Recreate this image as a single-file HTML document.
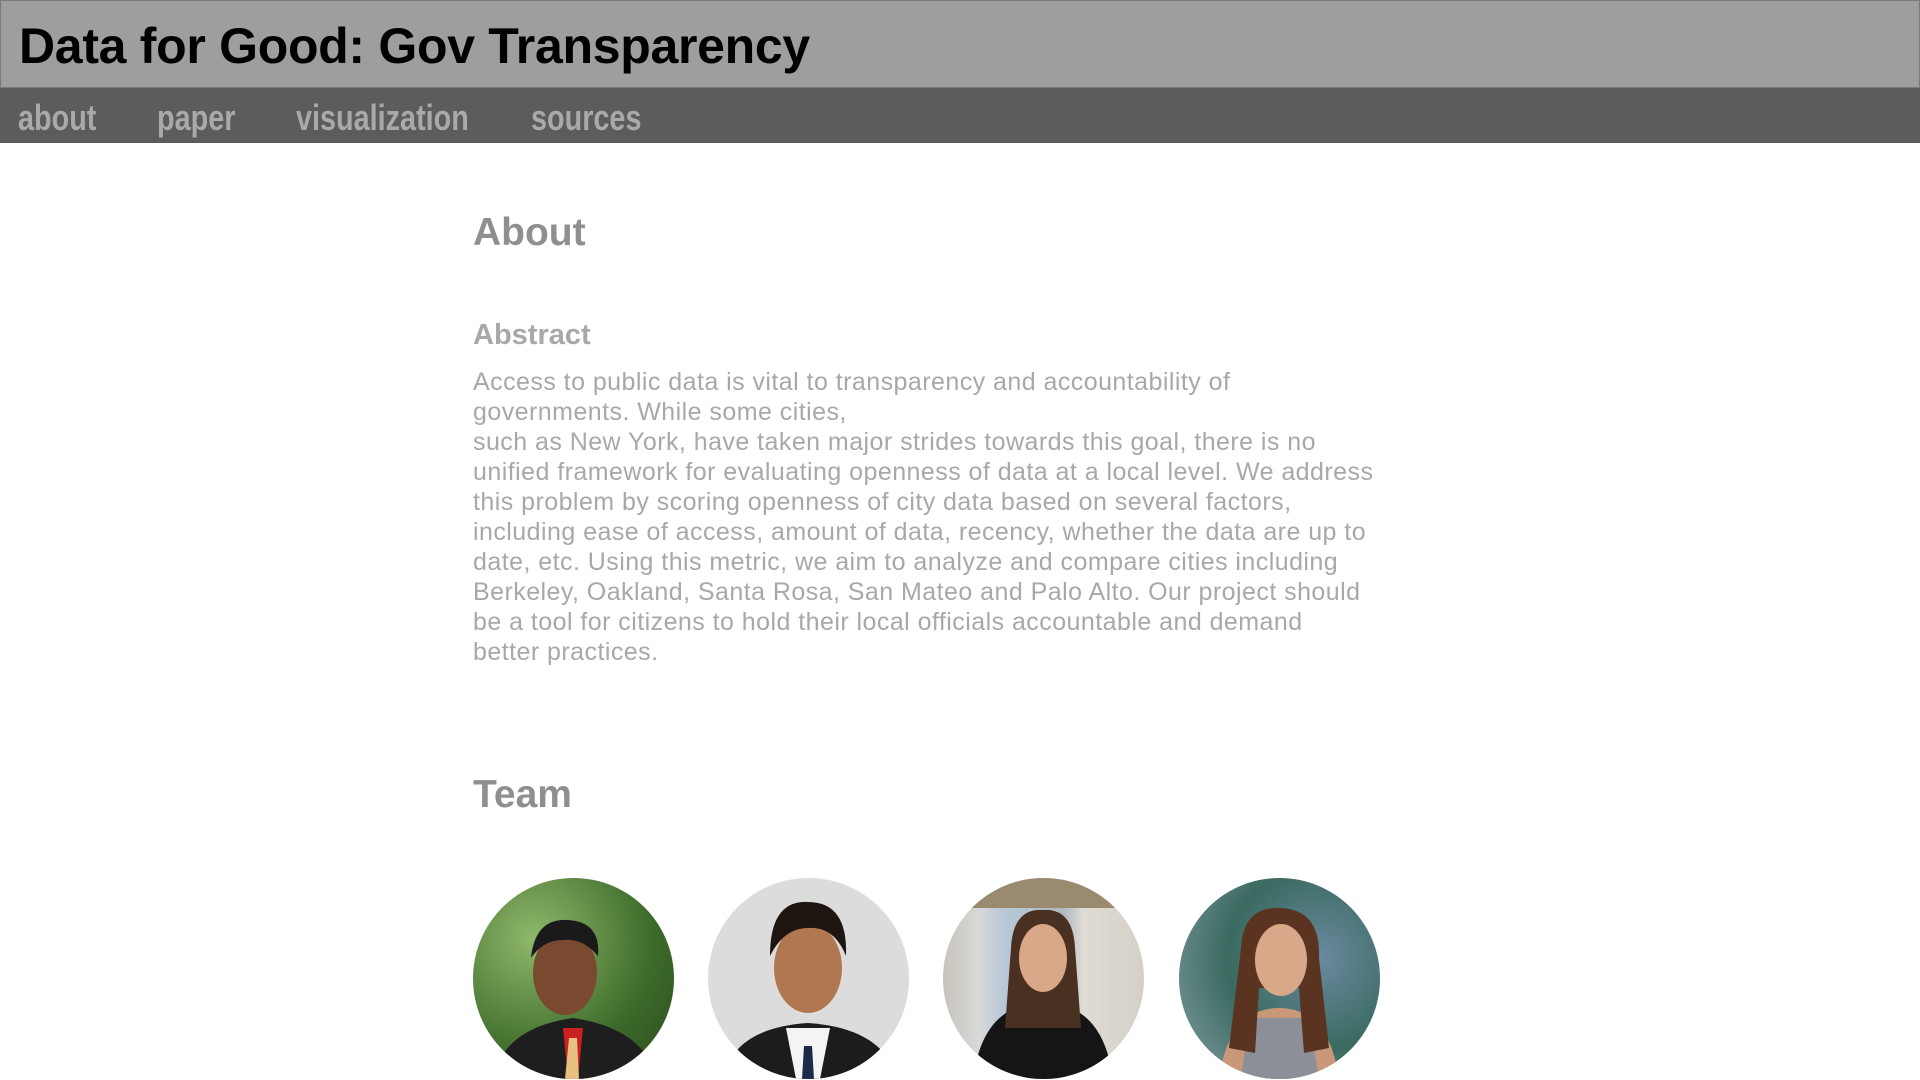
<!DOCTYPE html>
<html><head><meta charset="utf-8"><style>
*{margin:0;padding:0;box-sizing:border-box}
body{width:1920px;height:1080px;overflow:hidden;background:#fff;font-family:"Liberation Sans",Arial,sans-serif}
.hdr{position:absolute;left:0;top:0;width:1920px;height:88px;background:#9e9e9e;border:1px solid #7a7a7a}
.hdr h1{position:absolute;left:18px;top:16px;font-size:50px;font-weight:bold;color:#000;letter-spacing:-0.3px}
.nav{position:absolute;left:0;top:88px;width:1920px;height:55px;background:#5c5c5c}
.nav span{position:absolute;top:9px;font-weight:bold;font-size:36px;color:#a9a9a9;transform:scaleX(0.8);transform-origin:left;white-space:nowrap}
h2{font-size:39px;font-weight:bold;color:#8f8f8f;position:absolute;white-space:nowrap}
h3{font-size:29px;font-weight:bold;color:#a8a8a8;position:absolute;left:473px;top:319px}
p{position:absolute;left:473px;top:367px;font-size:25px;letter-spacing:0.45px;line-height:30px;color:#a8a8a8;white-space:nowrap}
.ph{position:absolute;top:878px;width:201px;height:201px;border-radius:50%;overflow:hidden}
</style></head><body>
<div class="hdr"><h1>Data for Good: Gov Transparency</h1></div>
<div class="nav"><span style="left:18px">about</span><span style="left:157px">paper</span><span style="left:296px">visualization</span><span style="left:531px">sources</span></div>
<h2 style="left:473px;top:211px">About</h2>
<h3>Abstract</h3>
<p>Access to public data is vital to transparency and accountability of<br>governments. While some cities,<br>such as New York, have taken major strides towards this goal, there is no<br>unified framework for evaluating openness of data at a local level. We address<br>this problem by scoring openness of city data based on several factors,<br>including ease of access, amount of data, recency, whether the data are up to<br>date, etc. Using this metric, we aim to analyze and compare cities including<br>Berkeley, Oakland, Santa Rosa, San Mateo and Palo Alto. Our project should<br>be a tool for citizens to hold their local officials accountable and demand<br>better practices.</p>
<h2 style="left:473px;top:773px">Team</h2>

<div class="ph" style="left:473px;background:radial-gradient(circle at 30% 30%,#8fb86a,#3d6b2a 60%,#2a4a1c)">
<svg width="201" height="201"><path d="M20 201 Q30 150 100 140 Q170 150 185 201Z" fill="#1e1e1e"/><path d="M90 150 L110 150 L105 201 L95 201Z" fill="#c92020"/><path d="M96 160 L104 160 L106 201 L92 201Z" fill="#e8c080"/><ellipse cx="92" cy="95" rx="32" ry="42" fill="#7a4a30"/><path d="M58 80 Q62 40 95 42 Q128 44 125 78 Q110 60 90 62 Q70 62 58 80Z" fill="#1a1a1a"/></svg></div>

<div class="ph" style="left:708px;background:#dcdcdc">
<svg width="201" height="201"><path d="M15 201 Q25 150 100 145 Q175 150 190 201Z" fill="#1c1c1c"/><path d="M78 150 L122 150 L112 201 L88 201Z" fill="#f4f4f4"/><path d="M96 168 L104 168 L106 201 L94 201Z" fill="#1c2a4a"/><ellipse cx="100" cy="90" rx="34" ry="45" fill="#b07850"/><path d="M62 78 Q62 22 100 24 Q140 24 138 78 Q126 48 100 50 Q76 50 62 78Z" fill="#1e1410"/></svg></div>

<div class="ph" style="left:943px;background:linear-gradient(90deg,#c8c4bc 0%,#d8d8d8 18%,#b8c8d8 30%,#b0b8c0 60%,#e0dcd4 70%,#d4d0c8 100%)">
<svg width="201" height="201"><rect x="0" y="0" width="201" height="30" fill="#9a8a70"/><path d="M30 201 Q40 125 100 125 Q160 125 170 201Z" fill="#151515"/><path d="M68 70 Q70 30 100 32 Q130 30 132 70 L138 150 L62 150Z" fill="#4a3020"/><ellipse cx="100" cy="80" rx="24" ry="34" fill="#d8a888"/></svg></div>

<div class="ph" style="left:1179px;background:radial-gradient(circle at 70% 40%,#6a8aa0,#3a6a60 50%,#88a0a8)">
<svg width="201" height="201"><path d="M40 201 Q50 130 100 130 Q150 130 160 201Z" fill="#c89878"/><path d="M70 140 L130 140 L140 201 L62 201Z" fill="#8a8f98"/><path d="M62 70 Q64 28 102 30 Q142 32 140 80 L150 170 L125 175 L120 110 L80 110 L76 175 L50 170Z" fill="#5a3420"/><ellipse cx="102" cy="82" rx="26" ry="36" fill="#d8a888"/></svg></div>
</body></html>
